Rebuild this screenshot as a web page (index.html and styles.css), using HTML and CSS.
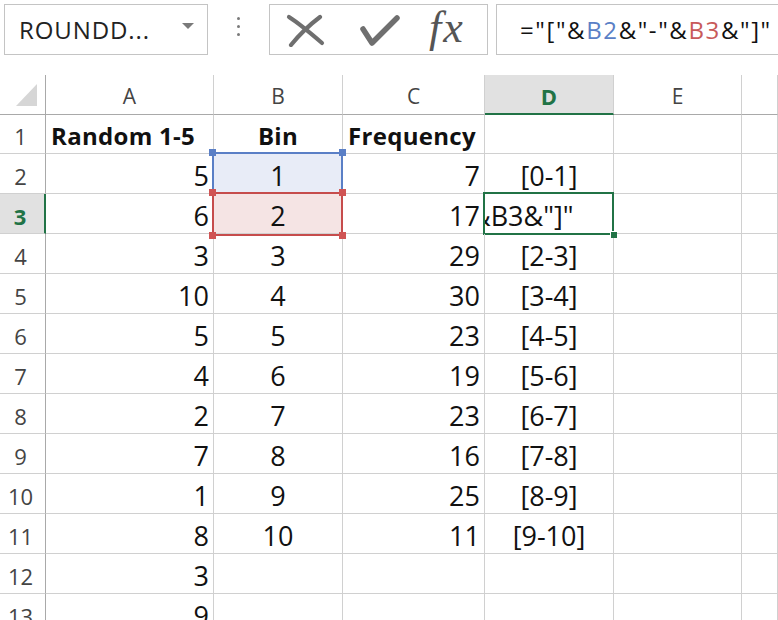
FILE: index.html
```html
<!DOCTYPE html>
<html>
<head>
<meta charset="utf-8">
<link rel="stylesheet" href="styles.css">
</head>
<body>
<div class="bar">
  <div class="namebox"><span class="name">ROUNDD...</span><span class="arrow"></span></div>
  <div class="dots"><i></i><i></i><i></i></div>
  <div class="buttons">
    <svg class="ico-x" width="40" height="34" viewBox="0 0 40 34"><path d="M3 4 Q14 11 36 30" /><path d="M34 4 Q18 16 5 32" /></svg>
    <svg class="ico-ok" width="42" height="34" viewBox="0 0 42 34"><path d="M4 15 L13 29 L38 4" /></svg>
    <span class="fx">fx</span>
  </div>
  <div class="formula">="["&amp;<span class="rb">B2</span>&amp;"-"&amp;<span class="rr">B3</span>&amp;"]"</div>
</div>
<div class="sheet">
  <div class="c corner"><span class="tri"></span></div>
  <div class="c ch">A</div><div class="c ch">B</div><div class="c ch">C</div><div class="c ch act">D</div><div class="c ch">E</div><div class="c ch"></div>

  <div class="c rh">1</div><div class="c l b">Random 1-5</div><div class="c m b">Bin</div><div class="c l b">Frequency</div><div class="c"></div><div class="c"></div><div class="c"></div>

  <div class="c rh">2</div><div class="c r">5</div><div class="c m refb">1<span class="frame fb"></span><span class="sq sb tl"></span><span class="sq sb tr"></span></div><div class="c r">7</div><div class="c m">[0-1]</div><div class="c"></div><div class="c"></div>

  <div class="c rh act">3</div><div class="c r">6</div><div class="c m refr">2<span class="frame fr"></span><span class="sq sr tl"></span><span class="sq sr tr"></span><span class="sq sr bl"></span><span class="sq sr br"></span></div><div class="c r">17</div><div class="c edit"><span class="edtext">&amp;B3&amp;"]"</span><span class="activebox"></span><span class="handle"></span></div><div class="c"></div><div class="c"></div>

  <div class="c rh">4</div><div class="c r">3</div><div class="c m">3</div><div class="c r">29</div><div class="c m">[2-3]</div><div class="c"></div><div class="c"></div>
  <div class="c rh">5</div><div class="c r">10</div><div class="c m">4</div><div class="c r">30</div><div class="c m">[3-4]</div><div class="c"></div><div class="c"></div>
  <div class="c rh">6</div><div class="c r">5</div><div class="c m">5</div><div class="c r">23</div><div class="c m">[4-5]</div><div class="c"></div><div class="c"></div>
  <div class="c rh">7</div><div class="c r">4</div><div class="c m">6</div><div class="c r">19</div><div class="c m">[5-6]</div><div class="c"></div><div class="c"></div>
  <div class="c rh">8</div><div class="c r">2</div><div class="c m">7</div><div class="c r">23</div><div class="c m">[6-7]</div><div class="c"></div><div class="c"></div>
  <div class="c rh">9</div><div class="c r">7</div><div class="c m">8</div><div class="c r">16</div><div class="c m">[7-8]</div><div class="c"></div><div class="c"></div>
  <div class="c rh">10</div><div class="c r">1</div><div class="c m">9</div><div class="c r">25</div><div class="c m">[8-9]</div><div class="c"></div><div class="c"></div>
  <div class="c rh">11</div><div class="c r">8</div><div class="c m">10</div><div class="c r">11</div><div class="c m">[9-10]</div><div class="c"></div><div class="c"></div>
  <div class="c rh">12</div><div class="c r">3</div><div class="c"></div><div class="c"></div><div class="c"></div><div class="c"></div><div class="c"></div>
  <div class="c rh">13</div><div class="c r">9</div><div class="c"></div><div class="c"></div><div class="c"></div><div class="c"></div><div class="c"></div>
</div>
</body>
</html>
```
FILE: styles.css
```css
html, body {
  margin: 0;
  padding: 0;
  background: #fff;
  overflow: hidden;
}
body {
  width: 778px;
  height: 620px;
  font-family: "Open Sans", "Noto Sans", sans-serif;
  color: #111;
}
.bar {
  height: 75px;
  display: flex;
  align-items: flex-start;
  padding-top: 4px;
  box-sizing: border-box;
}
.namebox {
  margin-left: 4px;
  width: 204px;
  height: 51px;
  box-sizing: border-box;
  border: 1px solid #c4c4c4;
  display: flex;
  align-items: center;
  justify-content: space-between;
  padding: 0 13px 0 14px;
}
.name {
  font-size: 24px;
  color: #222;
  letter-spacing: 0.9px;
}
.arrow {
  width: 0;
  height: 0;
  border-left: 6px solid transparent;
  border-right: 6px solid transparent;
  border-top: 6px solid #7a7a7a;
  margin-bottom: 8px;
}
.dots {
  width: 61px;
  height: 51px;
  display: flex;
  flex-direction: column;
  align-items: center;
  justify-content: center;
  gap: 5px;
  padding-bottom: 6px;
  box-sizing: border-box;
}
.dots i {
  display: block;
  width: 3px;
  height: 3px;
  background: #7a7a7a;
  border-radius: 50%;
}
.buttons {
  width: 219px;
  height: 51px;
  box-sizing: border-box;
  border: 1px solid #c4c4c4;
  display: flex;
  align-items: center;
  padding-left: 16px;
}
.ico-x path, .ico-ok path {
  fill: none;
  stroke: #6f6f6f;
  stroke-linecap: round;
  stroke-linejoin: round;
}
.ico-x path { stroke-width: 4.2; }
.ico-ok path { stroke-width: 5.5; }
.ico-x { margin-top: 1px; }
.ico-ok { margin-left: 33px; margin-top: 3px; }
.fx {
  font-family: "Liberation Serif", "DejaVu Serif", serif;
  font-style: italic;
  font-size: 44px;
  color: #555;
  margin-left: 28px;
  margin-top: -4px;
  letter-spacing: 2px;
}
.formula {
  margin-left: 8px;
  flex: 1;
  height: 51px;
  box-sizing: border-box;
  border: 1px solid #c4c4c4;
  border-right: none;
  display: flex;
  align-items: center;
  padding-left: 23px;
  font-size: 24px;
  letter-spacing: 1.6px;
  color: #111;
  white-space: nowrap;
  overflow: hidden;
}
.rb { color: #5a7fc6; }
.rr { color: #c85a5a; }

.sheet {
  display: grid;
  grid-template-columns: 46px 168px 129px 142px 129px 128px 1fr;
  grid-template-rows: 40px 39px repeat(12, 40px);
  font-size: 27px;
}
.c {
  box-sizing: border-box;
  border-right: 1px solid #d0d0d0;
  border-bottom: 1px solid #d0d0d0;
  display: flex;
  align-items: center;
  white-space: nowrap;
  position: relative;
  padding-top: 4px;
}
.corner {
  border-right: 1px solid #a9a9a9;
  border-bottom: 1px solid #a9a9a9;
}
.tri {
  position: absolute;
  left: 16px;
  top: 9px;
  width: 0;
  height: 0;
  border-left: 21px solid transparent;
  border-bottom: 22px solid #d6d6d6;
}
.ch {
  justify-content: center;
  border-bottom: 1px solid #a9a9a9;
  border-right: 1px solid #d0d0d0;
  color: #444;
  font-size: 21px;
  padding-top: 3px;
}
.ch.act {
  background: #e1e1e1;
  color: #217346;
  font-weight: 700;
  font-size: 22px;
  border-bottom: 2px solid #217346;
}
.rh {
  justify-content: center;
  padding-right: 4px;
  border-right: 1px solid #a9a9a9;
  color: #444;
  font-size: 22px;
}
.rh.act {
  background: #e1e1e1;
  color: #217346;
  font-weight: 700;
  border-right: 2px solid #217346;
}
.l { justify-content: flex-start; padding-left: 5px; }
.r { justify-content: flex-end; padding-right: 4px; }
.m { justify-content: center; }
.b { font-weight: 700; font-size: 24px; padding-top: 2px; letter-spacing: 0.3px; }

.refb { background: #e8ecf7; }
.refr { background: #f5e4e4; }
.frame {
  position: absolute;
  top: -2px;
  left: -2px;
  right: -1px;
  bottom: -1px;
  border: 2px solid;
}
.fb { border-color: #5a7fc6; }
.fr { border-color: #c64c4c; bottom: -3px; }
.sq {
  position: absolute;
  width: 7px;
  height: 7px;
  z-index: 2;
}
.sb { background: #5a7fc6; }
.sr { background: #d05454; }
.tl { left: -5px; top: -5px; }
.tr { right: -4px; top: -5px; }
.sr.bl { left: -5px; bottom: -6px; }
.sr.br { right: -4px; bottom: -6px; }

.edtext {
  display: block;
  width: 100%;
  overflow: hidden;
  text-indent: -14px;
}
.activebox {
  position: absolute;
  top: -2px;
  left: -2px;
  right: -1px;
  bottom: -2px;
  border: 2px solid #217346;
}
.handle {
  position: absolute;
  right: -4px;
  bottom: -5px;
  width: 6px;
  height: 6px;
  background: #217346;
  border-left: 1px solid #fff;
  border-top: 1px solid #fff;
  z-index: 3;
}
```
